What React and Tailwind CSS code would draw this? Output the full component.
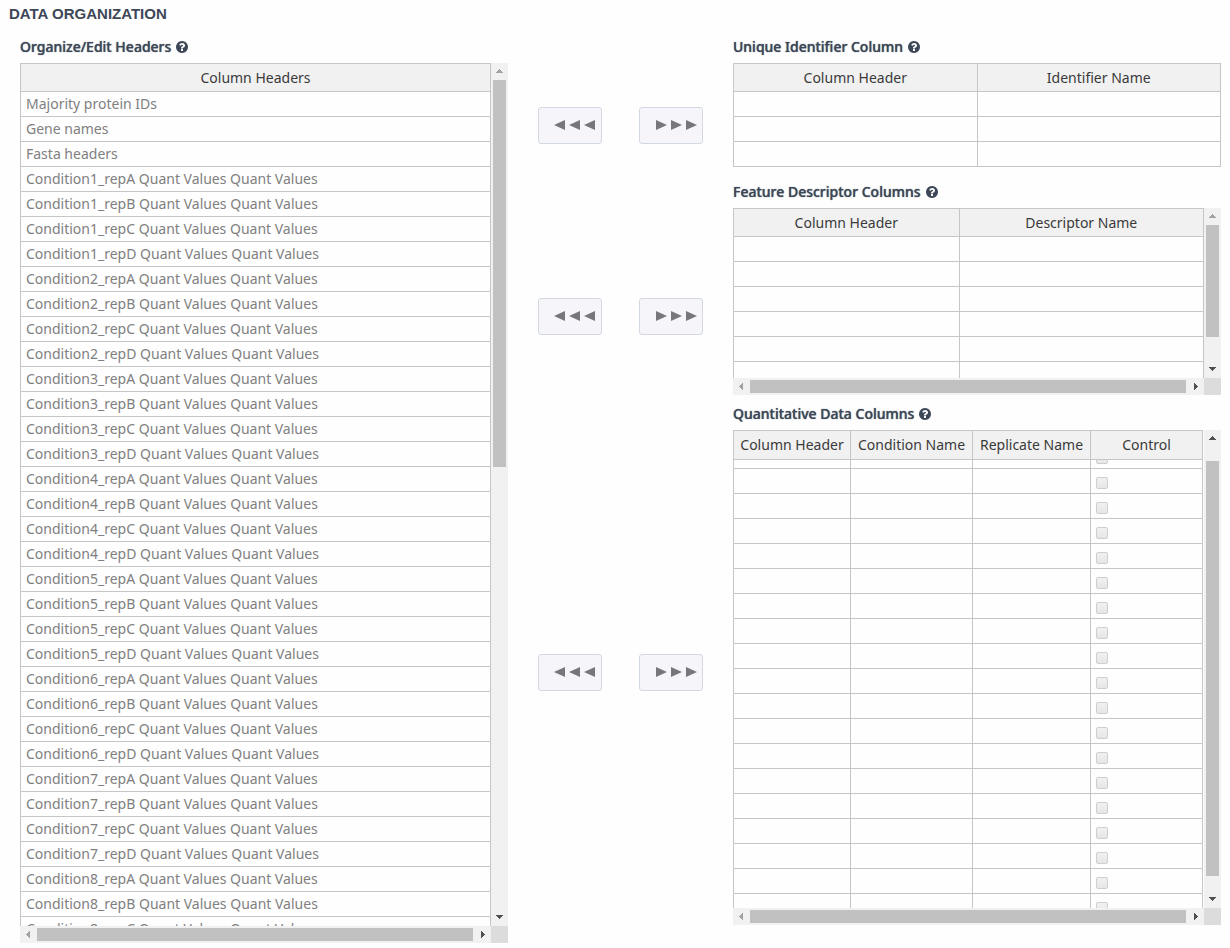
import { useLayoutEffect, useRef } from "react";

const REPLICATES = ["A", "B", "C", "D"];
const conditionHeaders = Array.from({ length: 8 }, (_, i) => i + 1).flatMap((n) =>
  REPLICATES.map((r) => `Condition${n}_rep${r} Quant Values Quant Values`)
);
const HEADERS = ["Majority protein IDs", "Gene names", "Fasta headers", ...conditionHeaders];

function HelpIcon() {
  return (
    <svg viewBox="0 0 1792 1792" className="size-3.5 fill-current" aria-hidden="true">
      <path d="M1024 1376v-192q0-14-9-23t-23-9h-192q-14 0-23 9t-9 23v192q0 14 9 23t23 9h192q14 0 23-9t9-23zm256-672q0-88-55.5-163t-138.5-116-170-41q-243 0-371 213-15 24 8 42l132 100q7 6 19 6 16 0 25-12 53-68 86-92 34-24 86-24 48 0 85.5 26t37.5 59q0 38-20 61t-68 45q-63 28-115.5 86.5t-52.5 125.5v36q0 14 9 23t23 9h192q14 0 23-9t9-23q0-19 21.5-49.5t54.5-49.5q32-18 49-28.5t46-35 44.5-48 28-60.5 12.5-81zm384 192q0 209-103 385.5t-279.5 279.5-385.5 103-385.5-103-279.5-279.5-103-385.5 103-385.5 279.5-279.5 385.5-103 385.5 103 279.5 279.5 103 385.5z" />
    </svg>
  );
}

function Label({ id, children }) {
  return (
    <h3
      id={id}
      className="flex h-8 items-center gap-1 font-['Noto_Sans','Open_Sans',sans-serif] text-sm font-medium text-[#3d4757] [text-shadow:0_0_1px_#3d4757]"
    >
      {children}
      <HelpIcon />
    </h3>
  );
}

const ARROWS = {
  up: "M8 6h1v1h1v1h1v1h1v1H5V9h1V8h1V7h1z",
  down: "M5 6h7v1h-1v1h-1v1H9v1H8V9H7V8H6V7H5z",
  left: "M10 5v7H9v-1H8v-1H7V9H6V8h1V7h1V6h1V5z",
  right: "M7 5v7h1v-1h1v-1h1V9h1V8h-1V7H9V6H8V5z",
};

function Arrow({ dir, dim }) {
  return (
    <svg
      viewBox="0 0 17 17"
      shapeRendering="crispEdges"
      className={dim ? "size-[17px] shrink-0 fill-[#a3a3a3]" : "size-[17px] shrink-0 fill-[#505050]"}
    >
      <path d={ARROWS[dir]} />
    </svg>
  );
}

function Bar({ vertical, before, thumb, after }) {
  const parts = [
    <Arrow key="start" dir={vertical ? "up" : "left"} dim={before === 0} />,
    <div key="before" style={{ flex: `${before} 0 0` }} />,
    <div key="thumb" className="bg-[#c1c1c1]" style={{ flex: `${thumb} 0 0` }} />,
    <div key="after" style={{ flex: `${after} 0 0` }} />,
    <Arrow key="end" dir={vertical ? "down" : "right"} />,
  ];
  return vertical ? (
    <div className="flex flex-col bg-[#f1f1f1] *:[div]:mx-0.5">{parts}</div>
  ) : (
    <div className="flex bg-[#f1f1f1] *:[div]:my-0.5">{parts}</div>
  );
}

function ScrollPane({ height, bar, scrollTop = 0, children }) {
  const ref = useRef(null);
  useLayoutEffect(() => {
    ref.current.scrollTop = scrollTop;
  }, [scrollTop]);
  return (
    <div className="grid grid-cols-[minmax(0,1fr)_17px] grid-rows-[auto_17px]">
      <div ref={ref} className={`overflow-auto [scrollbar-width:none] ${height}`}>
        {children}
      </div>
      <Bar vertical {...bar} />
      <Bar before={0} thumb={436} after={1} />
      <div className="bg-[#dcdcdc]" />
    </div>
  );
}

const TABLE =
  "w-full table-fixed border-separate border-spacing-0 border-l border-[#c6c6c6] font-['Noto_Sans','Open_Sans',sans-serif] text-sm";
const TH = "sticky top-0 h-[29px] border-y border-r border-[#c6c6c6] bg-[#f1f1f1] p-0 font-normal text-[#3a3a3a]";
const TH_TALL = "sticky top-0 h-[30px] border-y border-r border-[#c6c6c6] bg-[#f1f1f1] p-0 font-normal text-[#3a3a3a]";
const TD = "h-[25px] border-r border-b border-[#c6c6c6] p-0";

function EmptyTable({ labelledBy, columns, widths, rows }) {
  return (
    <table className={TABLE} aria-labelledby={labelledBy}>
      <colgroup>
        {widths.map((w, i) => (
          <col key={i} className={w} />
        ))}
      </colgroup>
      <thead>
        <tr>
          {columns.map((c) => (
            <th key={c} className={TH}>{c}</th>
          ))}
        </tr>
      </thead>
      <tbody>
        {Array.from({ length: rows }, (_, r) => (
          <tr key={r}>
            {columns.map((c) => (
              <td key={c} className={TD} />
            ))}
          </tr>
        ))}
      </tbody>
    </table>
  );
}

function MoveButtons({ target }) {
  const style =
    "flex h-[37px] w-16 items-center justify-end rounded-[3px] border border-[#d3d9e2] bg-[#f5f5fa] pr-1 pb-px text-[#77777b]";
  return (
    <div className="flex justify-between">
      <button type="button" className={style} aria-label={`Remove from ${target}`}>
        <svg viewBox="0 0 43 12" className="h-3 w-[43px] fill-current" aria-hidden="true">
          <path d="M0 6 11 1v10zM15 6 26 1v10zM30 6 41 1v10z" />
        </svg>
      </button>
      <button type="button" className={style} aria-label={`Add to ${target}`}>
        <svg viewBox="0 0 43 12" className="h-3 w-[43px] fill-current" aria-hidden="true">
          <path d="M1 1 12 6 1 11zM16 1 27 6 16 11zM31 1 42 6 31 11z" />
        </svg>
      </button>
    </div>
  );
}

export default function App() {
  return (
    <main className="min-h-screen bg-[#fefefe] pr-[9px] pb-1 pl-5 font-['Open_Sans','Noto_Sans',sans-serif]">
      <h2 className="-ml-[11px] flex h-[31px] items-center pb-0.5 font-['Liberation_Sans',Arial,sans-serif] text-[15px] font-bold text-[#3d4757]">
        DATA ORGANIZATION
      </h2>
      <div className="grid grid-cols-[minmax(0,1fr)_165px_minmax(0,1fr)] gap-x-[30px]">
        <section>
          <Label id="all-headers">Organize/Edit Headers</Label>
          <ScrollPane height="h-[863px]" bar={{ before: 0, thumb: 387, after: 442 }}>
            <table className={TABLE} aria-labelledby="all-headers">
              <thead>
                <tr>
                  <th className={TH}>Column Headers</th>
                </tr>
              </thead>
              <tbody>
                {HEADERS.map((h) => (
                  <tr key={h}>
                    <td className="h-[25px] border-r border-b border-[#c6c6c6] py-0 pl-[5px] text-[#808080]">{h}</td>
                  </tr>
                ))}
              </tbody>
            </table>
          </ScrollPane>
        </section>

        <div className="flex flex-col pt-[76px]">
          <MoveButtons target="unique identifier column" />
          <div className="h-[154px]" />
          <MoveButtons target="feature descriptor columns" />
          <div className="h-[319px]" />
          <MoveButtons target="quantitative data columns" />
        </div>

        <div className="flex flex-col">
          <section className="pb-[9px]">
            <Label id="identifier">Unique Identifier Column</Label>
            <EmptyTable
              labelledBy="identifier"
              columns={["Column Header", "Identifier Name"]}
              widths={["w-1/2", "w-1/2"]}
              rows={3}
            />
          </section>
          <section className="pb-[3px]">
            <Label id="descriptor">Feature Descriptor Columns</Label>
            <ScrollPane height="h-[170px]" bar={{ before: 0, thumb: 112, after: 24 }}>
              <EmptyTable
                labelledBy="descriptor"
                columns={["Column Header", "Descriptor Name"]}
                widths={["w-[48%]", "w-[52%]"]}
                rows={7}
              />
            </ScrollPane>
          </section>
          <section>
            <Label id="quantitative">Quantitative Data Columns</Label>
            <ScrollPane height="h-[478px] pr-px" bar={{ before: 14, thumb: 415, after: 15 }} scrollTop={16}>
              <table className={TABLE} aria-labelledby="quantitative">
                <colgroup>
                  <col className="w-[117px]" />
                  <col className="w-[122px]" />
                  <col className="w-[118px]" />
                  <col />
                </colgroup>
                <thead>
                  <tr>
                    <th className={TH_TALL}>Column Header</th>
                    <th className={TH_TALL}>Condition Name</th>
                    <th className={TH_TALL}>Replicate Name</th>
                    <th className={TH_TALL}>Control</th>
                  </tr>
                </thead>
                <tbody>
                  {Array.from({ length: 19 }, (_, r) => (
                    <tr key={r}>
                      <td className={TD} />
                      <td className={TD} />
                      <td className={TD} />
                      <td className={TD}>
                        <div className="flex h-6 items-end pb-1 pl-[5px]">
                          <input
                            type="checkbox"
                            aria-label={`Control, row ${r + 1}`}
                            className="size-3 appearance-none rounded-[2px] border border-[#cfcfcf] bg-linear-to-b from-[#f1f1f1] to-[#e6e6e6] checked:bg-[#808080]"
                          />
                        </div>
                      </td>
                    </tr>
                  ))}
                </tbody>
              </table>
            </ScrollPane>
          </section>
        </div>
      </div>
    </main>
  );
}
